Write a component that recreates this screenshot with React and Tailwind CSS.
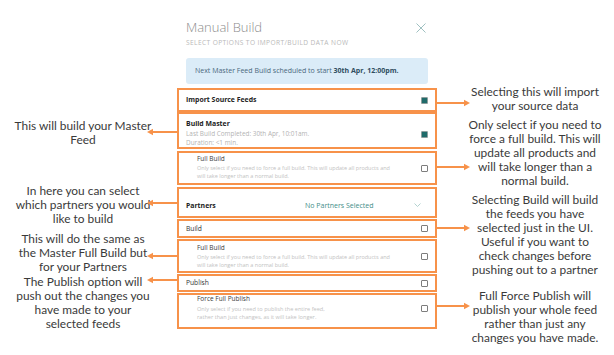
import React from "react";

const Check = ({ on }) => (
	<span
		className={
			on
				? "block w-[7px] h-[7px] shrink-0 bg-[#1f6b6a] border border-[#8f9d9d] rounded-[1px]"
				: "block w-[7px] h-[7px] shrink-0 bg-white border border-[#7d7d7d] rounded-[1px]"
		}
	/>
);

const Note = ({ top, left, lines }) => (
	<div
		className="absolute w-[146px] text-center text-[11.9px] leading-[14px] text-[#3a3a3a] font-['Lato',sans-serif]"
		style={{ top, left }}>
		{lines.map((l, i) => (
			<div key={i} className="whitespace-nowrap">
				{l}
			</div>
		))}
	</div>
);

const Arrow = ({ y, side }) =>
	side === "left" ? (
		<svg
			className="absolute"
			style={{ top: y - 4, left: 146 }}
			width="32"
			height="8"
			viewBox="0 0 32 8">
			<line x1="5" y1="4" x2="32" y2="4" stroke="#f7924a" strokeWidth="2" />
			<polygon points="1,4 7,0.8 7,7.2" fill="#f7924a" />
		</svg>
	) : (
		<svg
			className="absolute"
			style={{ top: y - 4, left: 437 }}
			width="34"
			height="8"
			viewBox="0 0 34 8">
			<line x1="0" y1="4" x2="29" y2="4" stroke="#f7924a" strokeWidth="2" />
			<polygon points="33,4 27,0.8 27,7.2" fill="#f7924a" />
		</svg>
	);

const Desc = ({ children }) => (
	<div className="text-[5.5px] leading-[7.5px] text-[#c2c2c2]">{children}</div>
);

const App = () => {
	return (
		<div className="relative w-[614px] h-[355px] bg-white overflow-hidden font-['Open_Sans',sans-serif]">
			<div className="ml-[177px] w-[260px] pt-[19px]">
				{/* header */}
				<div className="flex justify-between items-start pl-[9px] pr-[11px]">
					<div className="text-[13px] leading-[16px] font-light text-[#8d8d8d]">
						Manual Build
					</div>
					<svg
						className="mt-[4px]"
						width="10"
						height="10"
						viewBox="0 0 10 10">
						<path
							d="M0.5 0.5 L9.5 9.5 M9.5 0.5 L0.5 9.5"
							stroke="#9fc0c1"
							strokeWidth="1"
						/>
					</svg>
				</div>
				<div className="pl-[9px] mt-[3px] text-[6.6px] leading-[9px] tracking-[0.4px] text-[#b9b9b9]">
					SELECT OPTIONS TO IMPORT/BUILD DATA NOW
				</div>
				<div className="mx-[9px] mt-[11px] h-[26px] rounded-[3px] bg-[#dbecf8] flex items-center pl-[9px] text-[7px] text-[#4a687c]">
					Next Master Feed Build scheduled to start&nbsp;
					<span className="font-bold text-[#2f4c60]">30th Apr, 12:00pm.</span>
				</div>

				{/* rows */}
				<div className="mt-[4px] flex flex-col">
					<div className="h-[24px] border-2 border-[#f7924a] flex items-center justify-between pl-[7px] pr-[7px]">
						<span className="text-[6.9px] font-bold text-[#222222]">
							Import Source Feeds
						</span>
						<Check on />
					</div>

					<div className="h-[37px] border-2 border-[#f7924a] flex items-center justify-between pl-[7px] pr-[7px]">
						<div className="self-start pt-[5px] leading-[9.5px]">
							<div className="text-[6.9px] font-bold text-[#222222]">
								Build Master
							</div>
							<div className="text-[6.4px] text-[#b3b3b3]">
								Last Build Completed: 30th Apr, 10:01am.
							</div>
							<div className="text-[6.4px] text-[#b3b3b3]">
								Duration: &lt;1 min.
							</div>
						</div>
						<span className="mt-[8px]">
							<Check on />
						</span>
					</div>

					<div className="mt-[2px] h-[34px] border-2 border-[#f7924a] flex items-center justify-between pl-[18px] pr-[7px]">
						<div className="self-start pt-[0.5px]">
							<div className="text-[6.5px] leading-[9px] text-[#3a3a3a]">
								Full Build
							</div>
							<div className="mt-[2.5px]">
								<Desc>
									Only select if you need to force a full build. This will
									update all products and
								</Desc>
								<Desc>will take longer than a normal build.</Desc>
							</div>
						</div>
						<Check />
					</div>

					<div className="mt-[2px] h-[31px] border-2 border-[#f7924a] flex items-center pl-[7px] pr-[14px] pt-[7px]">
						<span className="w-[119px] text-[6.9px] font-bold text-[#222222]">
							Partners
						</span>
						<span className="text-[7px] text-[#3f8e89]">
							No Partners Selected
						</span>
						<svg
							className="ml-auto -mt-[3px]"
							width="7"
							height="4"
							viewBox="0 0 7 4">
							<path
								d="M0.5 0.5 L3.5 3.5 L6.5 0.5"
								stroke="#9fc6c4"
								strokeWidth="0.8"
								fill="none"
							/>
						</svg>
					</div>

					<div className="mt-[1px] h-[19px] border-2 border-[#f7924a] flex items-center justify-between pl-[7px] pr-[7px]">
						<span className="text-[6.7px] text-[#333333] mt-[2px]">Build</span>
						<Check />
					</div>

					<div className="mt-[1px] h-[34px] border-2 border-[#f7924a] flex items-center justify-between pl-[18px] pr-[7px]">
						<div className="self-start pt-[1.5px]">
							<div className="text-[6.5px] leading-[9px] text-[#3a3a3a]">
								Full Build
							</div>
							<div className="mt-[2.5px]">
								<Desc>
									Only select if you need to force a full build. This will
									update all products and
								</Desc>
								<Desc>will take longer than a normal build.</Desc>
							</div>
						</div>
						<Check />
					</div>

					<div className="mt-[1px] h-[18px] border-2 border-[#f7924a] flex items-center justify-between pl-[7px] pr-[7px]">
						<span className="text-[6.7px] text-[#333333]">Publish</span>
						<Check />
					</div>

					<div className="mt-[1px] h-[36px] border-2 border-[#f7924a] flex items-center justify-between pl-[18px] pr-[7px]">
						<div className="self-start">
							<div className="text-[6.5px] leading-[8.5px] text-[#3a3a3a]">
								Force Full Publish
							</div>
							<div className="mt-[1px] text-[5.6px] leading-[8px] text-[#c2c2c2]">
								<div>Only select if you need to publish the entire feed,</div>
								<div>rather than just changes, as it will take longer.</div>
							</div>
						</div>
						<span className="-mt-[5px]">
							<Check />
						</span>
					</div>
				</div>
			</div>

			{/* callouts, left */}
			<Note
				top={119}
				left={10}
				lines={["This will build your Master", "Feed"]}
			/>
			<Arrow y={132} side="left" />
			<Note
				top={184}
				left={10}
				lines={["In here you can select", "which partners you would", "like to build"]}
			/>
			<Arrow y={203} side="left" />
			<Note
				top={232}
				left={10}
				lines={[
					"This will do the same as",
					"the Master Full Build but",
					"for your Partners",
				]}
			/>
			<Arrow y={256} side="left" />
			<Note
				top={275}
				left={10}
				lines={[
					"The Publish option will",
					"push out the changes you",
					"have made to your",
					"selected feeds",
				]}
			/>
			<Arrow y={280} side="left" />

			{/* callouts, right */}
			<Note
				top={85}
				left={462}
				lines={["Selecting this will import", "your source data"]}
			/>
			<Arrow y={103} side="right" />
			<Note
				top={118}
				left={462}
				lines={[
					"Only select if you need to",
					"force a full build. This will",
					"update all products and",
					"will take longer than a",
					"normal build.",
				]}
			/>
			<Arrow y={167} side="right" />
			<Note
				top={193}
				left={462}
				lines={[
					"Selecting Build will build",
					"the feeds you have",
					"selected just in the UI.",
					"Useful if you want to",
					"check changes before",
					"pushing out to a partner",
				]}
			/>
			<Arrow y={228} side="right" />
			<Note
				top={289}
				left={462}
				lines={[
					"Full Force Publish will",
					"publish your whole feed",
					"rather than just any",
					"changes you have made.",
				]}
			/>
			<Arrow y={306} side="right" />
		</div>
	);
};

export default App;
